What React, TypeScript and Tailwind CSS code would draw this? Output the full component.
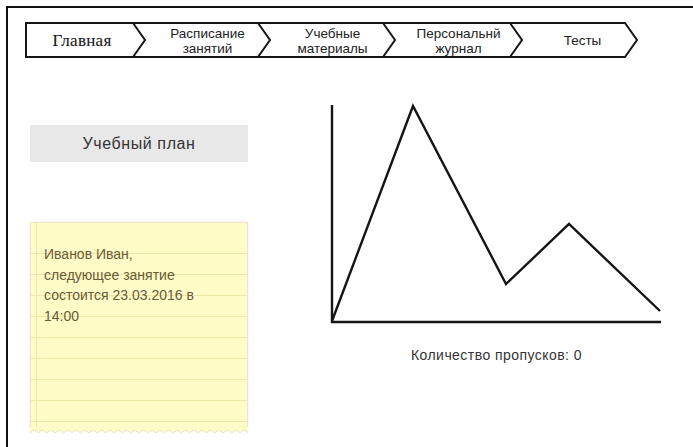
import React from "react";

const sans = { fontFamily: '"Liberation Sans", Arial, sans-serif' };

const tabs = [
  { w: "w-[114px]", lines: ["Главная"], serif: true },
  { w: "w-[125px]", lines: ["Расписание", "занятий"] },
  { w: "w-[125px]", lines: ["Учебные", "материалы"] },
  { w: "w-[127px]", lines: ["Персональнй", "журнал"] },
  { w: "w-[121px]", lines: ["Тесты"] },
];

function NavBar() {
  return (
    <div className="relative h-[37px] w-[614px]">
      <svg
        className="absolute inset-0"
        width="614"
        height="37"
        viewBox="0 0 614 37"
        fill="none"
        stroke="#161616"
        strokeWidth="2"
        strokeLinejoin="miter"
      >
        <path d="M1 1 H600 L612 18 L600 35 H1 Z" />
        <path d="M108 1 L120 18 L108 35" />
        <path d="M233 1 L245 18 L233 35" />
        <path d="M358 1 L370 18 L358 35" />
        <path d="M485 1 L497 18 L485 35" />
      </svg>
      <div className="relative flex h-full">
        {tabs.map((t, i) => (
          <div
            key={i}
            className={`${t.w} ${i > 0 ? "pl-[12px]" : ""} flex h-full flex-col items-center justify-center text-center text-[#222]`}
          >
            {t.serif ? (
              <span
                className="font-['Liberation_Serif',serif] text-[17px] leading-none tracking-[0.3px] text-[#1c1c1c]"
                style={{ WebkitTextStroke: "0.15px #1c1c1c" }}
              >
                {t.lines[0]}
              </span>
            ) : (
              t.lines.map((l) => (
                <span key={l} className="whitespace-nowrap text-[13.5px] leading-[15px]" style={sans}>
                  {l}
                </span>
              ))
            )}
          </div>
        ))}
      </div>
    </div>
  );
}

const wave = Array.from({ length: 26 }, (_, i) => {
  const x = 8.4 * (i + 1);
  return `Q${(x - 4.2).toFixed(1)} 1 ${x.toFixed(1)} 6`;
}).join(" ");

function StickyNote() {
  return (
    <div className="relative h-[215px] w-[218px]">
      <div className="h-[205px] border-x border-t border-[#ebe7c4] bg-[#fffcc8] bg-[repeating-linear-gradient(to_bottom,transparent_0px,transparent_20px,#efe7a9_20px,#efe7a9_21px)] bg-[position:0_10px] pl-[13px] pt-[21px] shadow-[0_0_3px_rgba(0,0,0,0.08)]">
        <p className="text-[14px] leading-[20.5px] text-[#6a5a36]" style={sans}>
          Иванов Иван,
          <br />
          следующее занятие
          <br />
          состоится 23.03.2016 в
          <br />
          14:00
        </p>
      </div>
      {/* margin rule of the notepad sheet */}
      <div className="absolute left-[6px] top-0 h-[205px] w-px bg-[#f3dfb0]" />
      <svg width="218" height="10" viewBox="0 0 218 10" className="block">
        <path d={`M0 0 V6 ${wave} V0 Z`} fill="#fffcc8" stroke="none" />
        <path d={`M0 6 ${wave}`} fill="none" stroke="#e6e1c2" strokeWidth="1" />
      </svg>
    </div>
  );
}

function Chart() {
  return (
    <svg width="343" height="230" viewBox="0 0 343 230" fill="none" stroke="#151515" strokeWidth="2.4">
      <path d="M7 7 V224 H336" />
      <polyline points="7,223 88,8 181,186 244,126 335,213" strokeLinejoin="miter" />
    </svg>
  );
}

export default function App() {
  return (
    <div className="h-[447px] w-[693px] overflow-hidden bg-white">
      <div className="ml-[6px] mt-[6px] h-[441px] border-l-2 border-t-2 border-[#111] pl-[17px] pt-[14px]">
        <NavBar />
        <div className="ml-[5px] flex items-start">
          <div className="mt-[66px] flex w-[218px] flex-col">
            <button
              className="h-[37px] w-full bg-[#e8e8e8] text-[16px] tracking-[0.6px] text-[#333]"
              style={sans}
            >
              Учебный план
            </button>
            <div className="mt-[60px]">
              <StickyNote />
            </div>
          </div>
          <div className="ml-[77px] mt-[39px] flex flex-col items-center">
            <Chart />
            <p className="mt-[19px] text-[14px] leading-[16px] tracking-[0.45px] text-[#333]" style={sans}>
              Количество пропусков: 0
            </p>
          </div>
        </div>
      </div>
    </div>
  );
}
